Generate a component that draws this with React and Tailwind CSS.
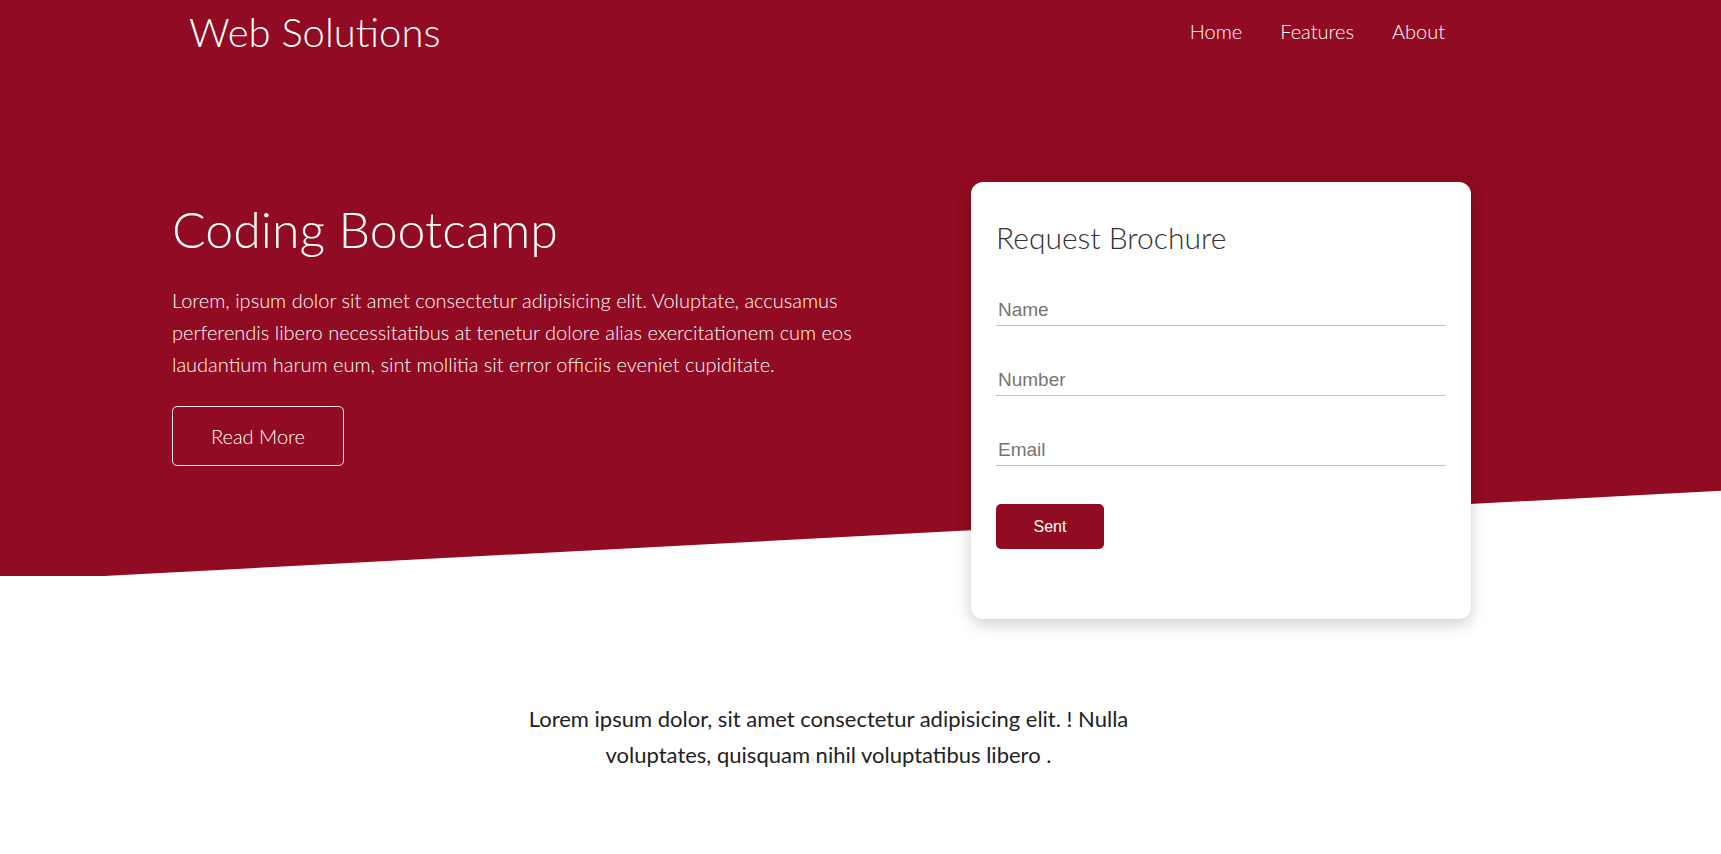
import { useState } from "react";

const navLinks = ["Home", "Features", "About"];

const fields = [
  { name: "name", placeholder: "Name", type: "text" },
  { name: "number", placeholder: "Number", type: "tel" },
  { name: "email", placeholder: "Email", type: "email" },
];

const App = () => {
  const [form, setForm] = useState({ name: "", number: "", email: "" });

  const handleChange = (e) => {
    setForm({ ...form, [e.target.name]: e.target.value });
  };

  return (
    <div className="min-h-[854px] bg-white font-['Lato',sans-serif]">
      <section className="relative">
        {/* red slanted backdrop */}
        <div className="absolute inset-x-0 top-0 h-[576px] bg-[#910b22] [clip-path:polygon(0_0,100%_0,100%_85.2%,6.04%_100%,0_100%)]" />

        <div className="relative">
          <nav className="flex items-start justify-between h-[64px] pt-[8px] pl-[189px] pr-[276px]">
            <a href="#" className="text-[40px] leading-[1.2] font-light text-white">
              Web Solutions
            </a>
            <ul className="flex gap-[38px] mt-[11px] text-[20px] leading-[1.2] font-light text-white">
              {navLinks.map((link) => (
                <li key={link}>
                  <a href="#">{link}</a>
                </li>
              ))}
            </ul>
          </nav>

          <div className="flex items-start pt-[118px] pl-[172px]">
            <div className="w-[799px] pt-[17px] text-white">
              <h1 className="text-[50px] leading-[1.2] font-light mb-[25px]">
                Coding Bootcamp
              </h1>
              <p className="max-w-[700px] text-[20px] leading-[32px] font-light">
                Lorem, ipsum dolor sit amet consectetur adipisicing elit.
                Voluptate, accusamus perferendis libero necessitatibus at tenetur
                dolore alias exercitationem cum eos laudantium harum eum, sint
                mollitia sit error officiis eveniet cupiditate.
              </p>
              <button className="mt-[26px] w-[172px] h-[60px] border border-white/90 rounded-[5px] text-[20px] font-light text-white">
                Read More
              </button>
            </div>

            <div className="w-[500px] bg-white rounded-[12px] px-[25px] pt-[37px] pb-[70px] shadow-[0_5px_16px_rgba(0,0,0,0.2)]">
              <h2 className="text-[30px] leading-[1.2] font-light text-[#333]">
                Request Brochure
              </h2>
              <form className="mt-[30px]" onSubmit={(e) => e.preventDefault()}>
                {fields.map((field) => (
                  <input
                    key={field.name}
                    name={field.name}
                    type={field.type}
                    placeholder={field.placeholder}
                    value={form[field.name]}
                    onChange={handleChange}
                    className="block w-full h-[41px] pt-[10px] pl-[2px] mb-[29px] border-b border-[#b4c3cd] bg-transparent font-['Liberation_Sans',Arial,sans-serif] text-[19px] text-[#333] placeholder:text-[#757575] focus:outline-none"
                  />
                ))}
                <button
                  type="submit"
                  className="mt-[9px] w-[108px] h-[45px] rounded-[5px] bg-[#910b22] font-['Liberation_Sans',Arial,sans-serif] text-[16px] text-white"
                >
                  Sent
                </button>
              </form>
            </div>
          </div>
        </div>
      </section>

      <section className="flex justify-center pt-[82px] pr-[64px]">
        <p className="max-w-[620px] text-center text-[22px] leading-[36px] text-[#222]">
          Lorem ipsum dolor, sit amet consectetur adipisicing elit. ! Nulla
          voluptates, quisquam nihil voluptatibus libero .
        </p>
      </section>
    </div>
  );
};

export default App;
